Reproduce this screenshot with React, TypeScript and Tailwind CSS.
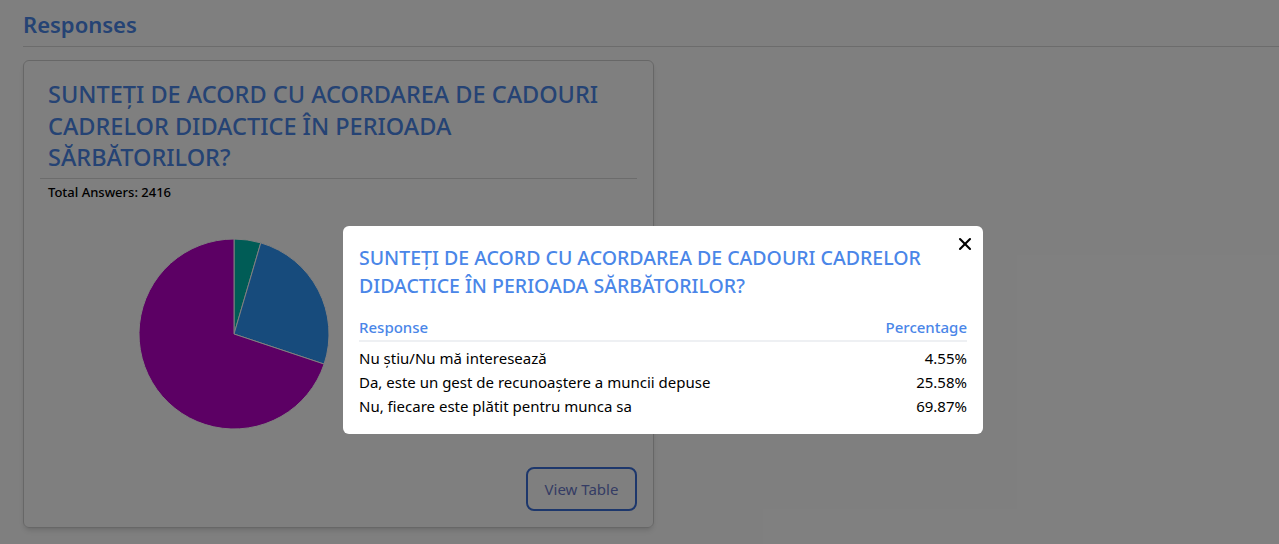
import { X } from 'lucide-react';

const ROWS = [
  { label: 'Nu știu/Nu mă interesează', pct: 4.55, color: '#00b8ac' },
  { label: 'Da, este un gest de recunoaștere a muncii depuse', pct: 25.58, color: '#2e96f8' },
  { label: 'Nu, fiecare este plătit pentru munca sa', pct: 69.87, color: '#b800c8' },
];

const TITLE = 'SUNTEȚI DE ACORD CU ACORDAREA DE CADOURI CADRELOR DIDACTICE ÎN PERIOADA SĂRBĂTORILOR?';

function Pie() {
  const r = 95;
  const c = 100;
  let acc = 0;
  return (
    <svg width="200" height="200" viewBox="0 0 200 200">
      {ROWS.map((row) => {
        const a0 = (acc / 100) * Math.PI * 2 - Math.PI / 2;
        acc += row.pct;
        const a1 = (acc / 100) * Math.PI * 2 - Math.PI / 2;
        const large = row.pct > 50 ? 1 : 0;
        const d = `M${c},${c} L${c + r * Math.cos(a0)},${c + r * Math.sin(a0)} A${r},${r} 0 ${large} 1 ${c + r * Math.cos(a1)},${c + r * Math.sin(a1)} Z`;
        return <path key={row.label} d={d} fill={row.color} stroke="#ffffff" strokeWidth="1" />;
      })}
    </svg>
  );
}

export default function App() {
  return (
    <div className="relative h-[544px] w-[1279px] overflow-hidden bg-white font-['Noto_Sans',sans-serif]">
      <div className="pl-[23px] pt-[8px]">
        <h2 className="text-[22px] font-semibold leading-[32px] text-[#4a86e8]">Responses</h2>
        <div className="mt-[6px] h-px bg-[#d9d9d9]" />

        <div className="mt-[13px] flex h-[468px] w-[631px] flex-col rounded-md border border-[#cfcfcf] px-[16px] pb-[16px] shadow-md">
          <h3 className="pl-[8px] pt-[18px] text-[23.5px] font-medium leading-[31.5px] text-[#4a86e8]">{TITLE}</h3>
          <div className="mt-[4px] h-px bg-[#d9d9d9]" />
          <div className="mt-[4px] pl-[8px] text-[13px] font-medium text-black">Total Answers: 2416</div>
          <div className="ml-[94px] mt-[32px]">
            <Pie />
          </div>
          <div className="mt-auto flex justify-end">
            <button className="h-[44px] w-[111px] rounded-lg border-2 border-[#3b6fd8] text-[15px] text-[#6a78c8]">
              View Table
            </button>
          </div>
        </div>
      </div>

      {/* overlay */}
      <div className="absolute inset-0 bg-black/50" />

      <div className="absolute left-[343px] top-[226px] w-[640px] rounded-md bg-white px-[16px] pb-[16px] pt-[18px]">
        <button className="absolute right-[8px] top-[8px] text-black">
          <X size={20} strokeWidth={2.5} />
        </button>
        <h3 className="pr-[40px] text-[19.5px] font-medium leading-[28px] text-[#4a86e8]">{TITLE}</h3>
        <table className="mt-[16px] w-full text-[15px]">
          <thead>
            <tr className="border-b-2 border-[#eef0f3] text-[#4a86e8]">
              <th className="pb-[2px] text-left font-medium leading-[22px]">Response</th>
              <th className="pb-[2px] text-right font-medium leading-[22px]">Percentage</th>
            </tr>
          </thead>
          <tbody className="text-black">
            {ROWS.map((row, i) => (
              <tr key={row.label}>
                <td className={`leading-[24px] ${i === 0 ? 'pt-[4px]' : ''}`}>{row.label}</td>
                <td className={`text-right leading-[24px] ${i === 0 ? 'pt-[4px]' : ''}`}>{row.pct.toFixed(2)}%</td>
              </tr>
            ))}
          </tbody>
        </table>
      </div>
    </div>
  );
}
